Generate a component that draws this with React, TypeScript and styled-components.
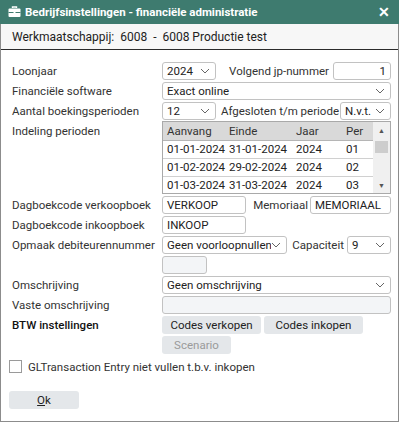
import React from 'react';
import styled, { createGlobalStyle } from 'styled-components';

const GlobalStyle = createGlobalStyle`
  html, body { margin: 0; padding: 0; background: #ffffff; }
  body { font-family: Roboto, "Liberation Sans", sans-serif; font-size: 11.5px; color: #333; }
  * { box-sizing: border-box; }
`;

const Window = styled.div`
  width: 399px;
  height: 422px;
  border: 1px solid #8c8c8c;
  border-top: none;
  display: flex;
  flex-direction: column;
  background: #fff;
`;

const TitleBar = styled.div`
  height: 24px;
  margin: 0 -1px;
  background: #3e7b6f;
  color: #fff;
  font-weight: 700;
  font-size: 11.5px;
  display: flex;
  align-items: center;
  padding: 0 9px 0 8px;
  gap: 4px;
`;

const TitleText = styled.span`
  flex: 1;
`;

const CloseBtn = styled.span`
  font-size: 14px;
  font-weight: 700;
`;

const HeaderBar = styled.div`
  height: 26px;
  background: #f7f7f7;
  border-bottom: 1px solid #2b2b2b;
  display: flex;
  align-items: center;
  padding-left: 11px;
  font-size: 12px;
  color: #222;
  white-space: pre;
`;

const Body = styled.div`
  padding: 12px 7px 0 11px;
  display: grid;
  grid-template-columns: 150px 1fr;
  row-gap: 2px;
`;

const Label = styled.div<{ strong?: boolean }>`
  height: 18px;
  line-height: 18px;
  color: ${p => (p.strong ? '#111' : '#333')};
  font-weight: ${p => (p.strong ? 500 : 400)};
  white-space: nowrap;
`;

const Field = styled.div`
  display: flex;
  align-items: center;
  min-height: 18px;
`;

const Inline = styled.span<{ pad: number }>`
  flex: 1;
  color: #333;
  white-space: nowrap;
  text-align: right;
  padding-right: ${p => p.pad}px;
`;

const SelectBox = styled.div<{ w?: number }>`
  height: 18px;
  width: ${p => (p.w ? `${p.w}px` : 'auto')};
  flex: ${p => (p.w ? 'none' : '1')};
  border: 1px solid #c2c2c2;
  border-radius: 3px;
  display: flex;
  align-items: center;
  padding: 0 5px 0 4px;
  color: #222;
  background: #fff;
`;

const SelectValue = styled.span`
  flex: 1;
  white-space: nowrap;
  overflow: hidden;
`;

const TextBox = styled.div<{ w?: number; right?: boolean; muted?: boolean }>`
  height: 18px;
  width: ${p => (p.w ? `${p.w}px` : 'auto')};
  flex: ${p => (p.w ? 'none' : '1')};
  border: 1px solid #c2c2c2;
  border-radius: 3px;
  padding: 0 4px;
  line-height: 16px;
  text-align: ${p => (p.right ? 'right' : 'left')};
  background: ${p => (p.muted ? '#f3f5f7' : '#fff')};
  color: #222;
`;

const Table = styled.div`
  flex: 1;
  height: 73px;
  margin-top: -1px;
  border: 1px solid #a9a9a9;
  display: flex;
  overflow: hidden;
`;

const Cols = styled.div`
  flex: 1;
  display: grid;
  grid-template-columns: 62px 67px 50px 1fr;
  grid-template-rows: 19px repeat(3, 18px);
`;

const Th = styled.div`
  background: #d9d9d9;
  border-bottom: 1px solid #b5b5b5;
  line-height: 18px;
  padding-left: 4px;
  color: #333;
`;

const Td = styled.div`
  border-bottom: 1px solid #d0d0d0;
  line-height: 17px;
  padding-left: 4px;
  color: #222;
  white-space: nowrap;
`;

const Scroll = styled.div`
  width: 17px;
  background: #f0f0f0;
  display: flex;
  flex-direction: column;
  align-items: center;
  font-size: 7px;
  color: #555;
`;

const ScrollArrow = styled.div<{ h: number }>`
  height: ${p => p.h}px;
  line-height: ${p => p.h}px;
`;

const Thumb = styled.div`
  width: 13px;
  height: 12px;
  background: #cdcdcd;
  margin-bottom: auto;
`;

const ButtonRow = styled.div`
  display: flex;
  gap: 3px;
`;

const Btn = styled.div<{ w: number; disabled?: boolean }>`
  width: ${p => p.w}px;
  height: 18px;
  border-radius: 3px;
  background: #e4e7ea;
  color: ${p => (p.disabled ? '#9a9a9a' : '#222')};
  text-align: center;
  line-height: 18px;
`;

const CheckRow = styled.div`
  display: flex;
  align-items: center;
  gap: 6px;
  padding: 6px 0 0 8px;
  height: 19px;
  color: #333;
`;

const Box = styled.span`
  width: 13px;
  height: 13px;
  border: 1px solid #9a9a9a;
  background: #fff;
`;

const Footer = styled.div`
  padding: 18px 0 0 8px;
`;

const Chevron = () => (
  <svg width="10" height="6" viewBox="0 0 10 6">
    <path d="M1 1l4 4 4-4" fill="none" stroke="#666" strokeWidth="1" />
  </svg>
);

const Briefcase = () => (
  <svg width="13" height="12" viewBox="0 0 13 12">
    <path d="M4.5 2V1h4v1" fill="none" stroke="#fff" strokeWidth="1.4" />
    <rect x="0.5" y="2.5" width="12" height="8.5" rx="1" fill="#fff" />
    <rect x="0.5" y="6" width="12" height="1" fill="#3e7b6f" />
    <rect x="5.5" y="5.3" width="2" height="2.4" fill="#fff" />
  </svg>
);

const Select: React.FC<{ value: string; w?: number }> = ({ value, w }) => (
  <SelectBox w={w}>
    <SelectValue>{value}</SelectValue>
    <Chevron />
  </SelectBox>
);

const periods = [
  ['01-01-2024', '31-01-2024', '2024', '01'],
  ['01-02-2024', '29-02-2024', '2024', '02'],
  ['01-03-2024', '31-03-2024', '2024', '03'],
];

const App: React.FC = () => (
  <>
    <GlobalStyle />
    <Window>
      <TitleBar>
        <Briefcase />
        <TitleText>Bedrijfsinstellingen - financiële administratie</TitleText>
        <CloseBtn>✕</CloseBtn>
      </TitleBar>
      <HeaderBar>Werkmaatschappij:  6008  -  6008 Productie test</HeaderBar>

      <Body>
        <Label>Loonjaar</Label>
        <Field>
          <Select value="2024" w={54} />
          <Inline pad={4}>Volgend jp-nummer</Inline>
          <TextBox w={58} right>1</TextBox>
        </Field>

        <Label>Financiële software</Label>
        <Field>
          <Select value="Exact online" />
        </Field>

        <Label>Aantal boekingsperioden</Label>
        <Field>
          <Select value="12" w={54} />
          <Inline pad={1}>Afgesloten t/m periode</Inline>
          <Select value="N.v.t." w={51} />
        </Field>

        <Label>Indeling perioden</Label>
        <Field>
          <Table>
            <Cols>
              <Th>Aanvang</Th>
              <Th>Einde</Th>
              <Th>Jaar</Th>
              <Th>Per</Th>
              {periods.map(row =>
                row.map((c, i) => <Td key={row[0] + i}>{c}</Td>)
              )}
            </Cols>
            <Scroll>
              <ScrollArrow h={19}>▲</ScrollArrow>
              <Thumb />
              <ScrollArrow h={14}>▼</ScrollArrow>
            </Scroll>
          </Table>
        </Field>

        <Label>Dagboekcode verkoopboek</Label>
        <Field>
          <TextBox w={84}>VERKOOP</TextBox>
          <Inline pad={2}>Memoriaal</Inline>
          <TextBox w={81}>MEMORIAAL</TextBox>
        </Field>

        <Label>Dagboekcode inkoopboek</Label>
        <Field>
          <TextBox w={84}>INKOOP</TextBox>
        </Field>

        <Label>Opmaak debiteurennummer</Label>
        <Field>
          <Select value="Geen voorloopnullen" w={125} />
          <Inline pad={3}>Capaciteit</Inline>
          <Select value="9" w={44} />
        </Field>

        <Label />
        <Field>
          <TextBox w={45} muted />
        </Field>

        <Label>Omschrijving</Label>
        <Field>
          <Select value="Geen omschrijving" />
        </Field>

        <Label>Vaste omschrijving</Label>
        <Field>
          <TextBox muted />
        </Field>

        <Label strong>BTW instellingen</Label>
        <Field>
          <ButtonRow>
            <Btn w={99}>Codes verkopen</Btn>
            <Btn w={99}>Codes inkopen</Btn>
          </ButtonRow>
        </Field>

        <Label />
        <Field>
          <Btn w={69} disabled>Scenario</Btn>
        </Field>
      </Body>

      <CheckRow>
        <Box />
        GLTransaction Entry niet vullen t.b.v. inkopen
      </CheckRow>

      <Footer>
        <Btn w={70}>
          <u>O</u>k
        </Btn>
      </Footer>
    </Window>
  </>
);

export default App;
